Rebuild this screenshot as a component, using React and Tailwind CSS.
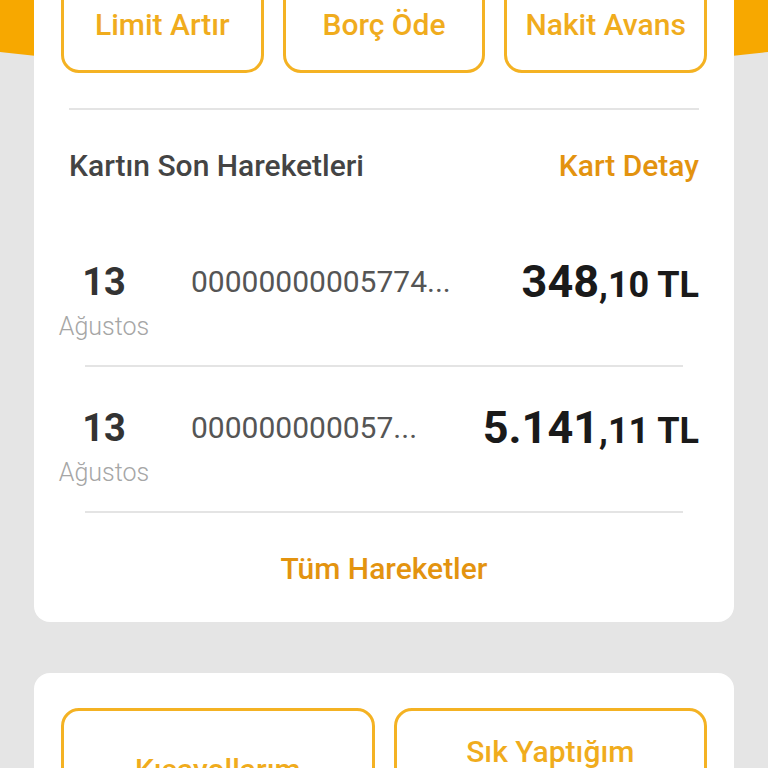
import React from 'react';

const ORANGE = 'text-[#f0ac1d]';

const actions = ['Limit Artır', 'Borç Öde', 'Nakit Avans'];

const txns = [
  { day: '13', month: 'Ağustos', desc: '00000000005774...', whole: '348', frac: ',10 TL' },
  { day: '13', month: 'Ağustos', desc: '000000000057...', whole: '5.141', frac: ',11 TL' },
];

const OutlineButton = ({ children, className = '' }) => (
  <button
    className={`flex items-center justify-center rounded-[18px] border-[3px] border-[#f4b223] bg-white font-medium ${ORANGE} ${className}`}
  >
    {children}
  </button>
);

export default function App() {
  return (
    <div className="relative h-[768px] overflow-hidden bg-[#e5e5e5] font-['Roboto',sans-serif]">
      {/* orange header curve behind the card */}
      <div className="absolute left-[-200px] top-[-90px] h-[162px] w-[1168px] rounded-[50%] bg-[#f7a800]" />

      <div className="relative px-[34px]">
        {/* card: last transactions */}
        <div className="-mt-[39px] rounded-[16px] bg-white px-[27px] pt-[16px] pb-[37px]">
          <div className="grid grid-cols-3 gap-[19px]">
            {actions.map(a => (
              <OutlineButton key={a} className="h-[96px] text-[30px] leading-none">
                {a}
              </OutlineButton>
            ))}
          </div>

          <div className="mx-[8px] mt-[35px] h-[2px] bg-[#e4e4e4]" />

          <div className="mx-[8px] mt-[40px] flex items-center justify-between leading-[32px]">
            <span className="text-[30px] font-medium text-[#444]">Kartın Son Hareketleri</span>
            <span className="text-[30px] font-medium text-[#e3930f]">Kart Detay</span>
          </div>

          <div className="mt-[80px]">
            {txns.map((t, i) => (
              <div key={i} className={i > 0 ? 'mt-[41px]' : ''}>
                <div className="flex items-start pr-[8px]">
                  <div className="-ml-[2px] flex w-[90px] flex-col items-center">
                    <span className="text-[38px] font-bold leading-[40px] text-[#333]">{t.day}</span>
                    <span className="text-[25px] font-light leading-[50px] text-[#a6a6a6]">{t.month}</span>
                  </div>
                  <span className="ml-[42px] flex-1 text-[30px] leading-[40px] text-[#555]">{t.desc}</span>
                  <span className="flex items-baseline font-bold leading-[40px] text-[#1a1a1a]">
                    <span className="text-[45px]">{t.whole}</span>
                    <span className="text-[36px]">{t.frac}</span>
                  </span>
                </div>
                <div className="mx-[24px] mt-[13px] h-[2px] bg-[#e4e4e4]" />
              </div>
            ))}
          </div>

          <div className="mt-[40px] text-center text-[30px] font-medium leading-[32px] text-[#e3930f]">
            Tüm Hareketler
          </div>
        </div>

        {/* card: shortcuts */}
        <div className="mt-[51px] rounded-[16px] bg-white px-[27px] pt-[35px] pb-[30px]">
          <div className="grid grid-cols-2 gap-[19px]">
            <OutlineButton className="h-[124px] text-[30px] leading-[36px]">Kısayollarım</OutlineButton>
            <OutlineButton className="h-[124px] flex-col text-[30px] leading-[36px]">
              <span>Sık Yaptığım</span>
              <span>İşlemler</span>
            </OutlineButton>
          </div>
        </div>
      </div>
    </div>
  );
}
